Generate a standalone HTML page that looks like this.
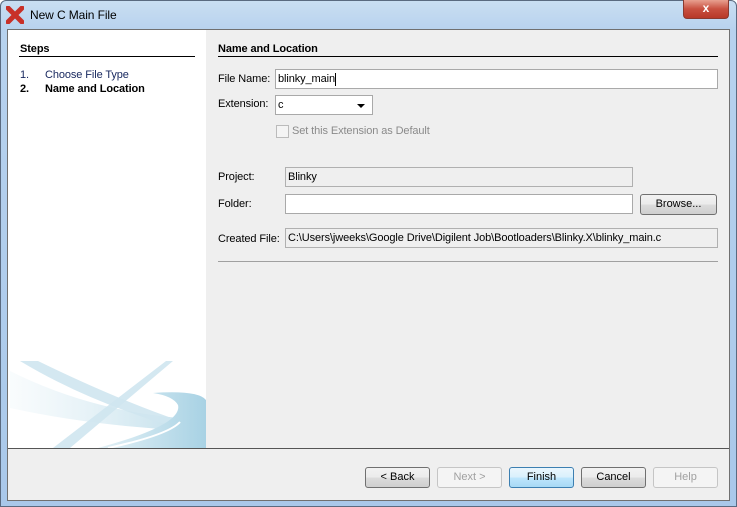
<!DOCTYPE html><html><head><style>
*{margin:0;padding:0;box-sizing:border-box}
body{width:737px;height:507px;overflow:hidden;background:#fff;font-family:"Liberation Sans",sans-serif;font-size:11px;color:#000;position:relative}
.a{position:absolute}
.frame{left:0;top:0;width:737px;height:507px;background:linear-gradient(#c9def2,#b7d2ee 30px,#a9c8ea);border:1px solid #5a6a80;border-radius:6px 6px 0 0}
.t{white-space:nowrap;line-height:13px;letter-spacing:-0.1px}
.in{background:#fff;border:1px solid #a9a9a9}
.ro{background:#efefef;border:1px solid #b0b0b0}
.btn{border:1px solid #707070;border-radius:3px;background:linear-gradient(#f2f2f2,#ebebeb 50%,#dcdcdc 51%,#cfcfcf);text-align:center;line-height:19px}
.dis{border-color:#c5c5c5;background:#f4f4f4;color:#a0a0a0}
</style></head><body>
<div class="a frame"></div>
<svg class="a" style="left:6px;top:6px" width="18" height="18" viewBox="0 0 18 18"><path d="M2 2L16 16M16 2L2 16" stroke="#c83028" stroke-width="5" stroke-linecap="round"/></svg>
<div class="a t" style="left:30px;top:9px;font-size:12px">New C Main File</div>
<div class="a" style="left:683px;top:0;width:46px;height:19px;border:1px solid #8a3a30;border-top:none;border-radius:0 0 4px 4px;background:linear-gradient(#e8a090,#c85040 50%,#b83828);color:#fff;font-weight:bold;text-align:center;line-height:17px;font-size:12px">x</div>
<div class="a" style="left:7px;top:29px;width:723px;height:472px;background:#efefef;border:1px solid #707070"></div>
<div class="a" style="left:8px;top:30px;width:198px;height:418px;background:#fff;overflow:hidden">
<svg width="198" height="418"><defs><linearGradient id="g" x1="0" x2="1"><stop offset="0" stop-color="#d8ebf3" stop-opacity="0.2"/><stop offset="1" stop-color="#b8dae8"/></linearGradient><linearGradient id="h" x1="0" x2="1"><stop offset="0" stop-color="#e4f1f6"/><stop offset="1" stop-color="#a8d2e4"/></linearGradient></defs>
<path d="M2 341 Q80 380 170 388 L170 400 Q80 395 2 378Z" fill="url(#g)" opacity="0.8"/>
<path d="M12 331 L30 331 Q110 370 175 392 L170 398 Q80 372 12 331Z" fill="#cfe5ef" opacity="0.9"/>
<path d="M165 331 L158 331 L45 418 L62 418Z" fill="#cfe5ef" opacity="0.9"/>
<path d="M145 363 Q190 360 198 370 L198 418 L90 418 Q175 395 170 375 Q165 366 145 363Z" fill="url(#h)"/>
<path d="M100 418 Q160 405 172 392" stroke="#fff" stroke-width="2" fill="none"/>
</svg></div>
<div class="a" style="left:8px;top:448px;width:721px;height:1px;background:#555"></div>
<div class="a t" style="left:20px;top:43px;font-weight:bold">Steps</div>
<div class="a" style="left:19px;top:56px;width:176px;height:1px;background:#000"></div>
<div class="a t" style="left:20px;top:69px;color:#1a2a60">1.</div><div class="a t" style="left:45px;top:69px;color:#1a2a60">Choose File Type</div>
<div class="a t" style="left:20px;top:83px;font-weight:bold">2.</div><div class="a t" style="left:45px;top:83px;font-weight:bold">Name and Location</div>
<div class="a t" style="left:218px;top:43px;font-weight:bold">Name and Location</div>
<div class="a" style="left:218px;top:56px;width:500px;height:1px;background:#000"></div>
<div class="a t" style="left:218px;top:73px">File Name:</div>
<div class="a in" style="left:275px;top:69px;width:443px;height:20px"></div>
<div class="a t" style="left:278px;top:73px">blinky_main<span style="display:inline-block;width:1px;height:13px;background:#000;vertical-align:top"></span></div>
<div class="a t" style="left:218px;top:98px">Extension:</div>
<div class="a in" style="left:275px;top:95px;width:98px;height:20px"></div>
<div class="a t" style="left:278px;top:99px">c</div>
<div class="a" style="left:357px;top:104px;border:4px solid transparent;border-top:4px solid #000;border-bottom:none"></div>
<div class="a" style="left:276px;top:125px;width:13px;height:13px;border:1px solid #bbb;background:#f4f4f4"></div>
<div class="a t" style="left:292px;top:125px;color:#8a8a8a">Set this Extension as Default</div>
<div class="a t" style="left:218px;top:171px">Project:</div>
<div class="a ro" style="left:285px;top:167px;width:348px;height:20px"></div>
<div class="a t" style="left:288px;top:171px">Blinky</div>
<div class="a t" style="left:218px;top:198px">Folder:</div>
<div class="a in" style="left:285px;top:194px;width:348px;height:20px"></div>
<div class="a btn" style="left:640px;top:194px;width:77px;height:21px">Browse...</div>
<div class="a t" style="left:218px;top:233px">Created File:</div>
<div class="a ro" style="left:285px;top:228px;width:433px;height:20px"></div>
<div class="a t" style="left:288px;top:232px">C:\Users\jweeks\Google Drive\Digilent Job\Bootloaders\Blinky.X\blinky_main.c</div>
<div class="a" style="left:218px;top:261px;width:500px;height:1px;background:#a0a0a0"></div>
<div class="a btn" style="left:365px;top:467px;width:65px;height:21px">&lt; Back</div>
<div class="a btn dis" style="left:437px;top:467px;width:65px;height:21px">Next &gt;</div>
<div class="a btn" style="left:509px;top:467px;width:65px;height:21px;border-color:#3c7fb1;background:linear-gradient(#eaf6fd,#d9f0fc 50%,#bee6fd 51%,#a7d9f5)">Finish</div>
<div class="a btn" style="left:581px;top:467px;width:65px;height:21px">Cancel</div>
<div class="a btn dis" style="left:653px;top:467px;width:65px;height:21px">Help</div>
</body></html>
